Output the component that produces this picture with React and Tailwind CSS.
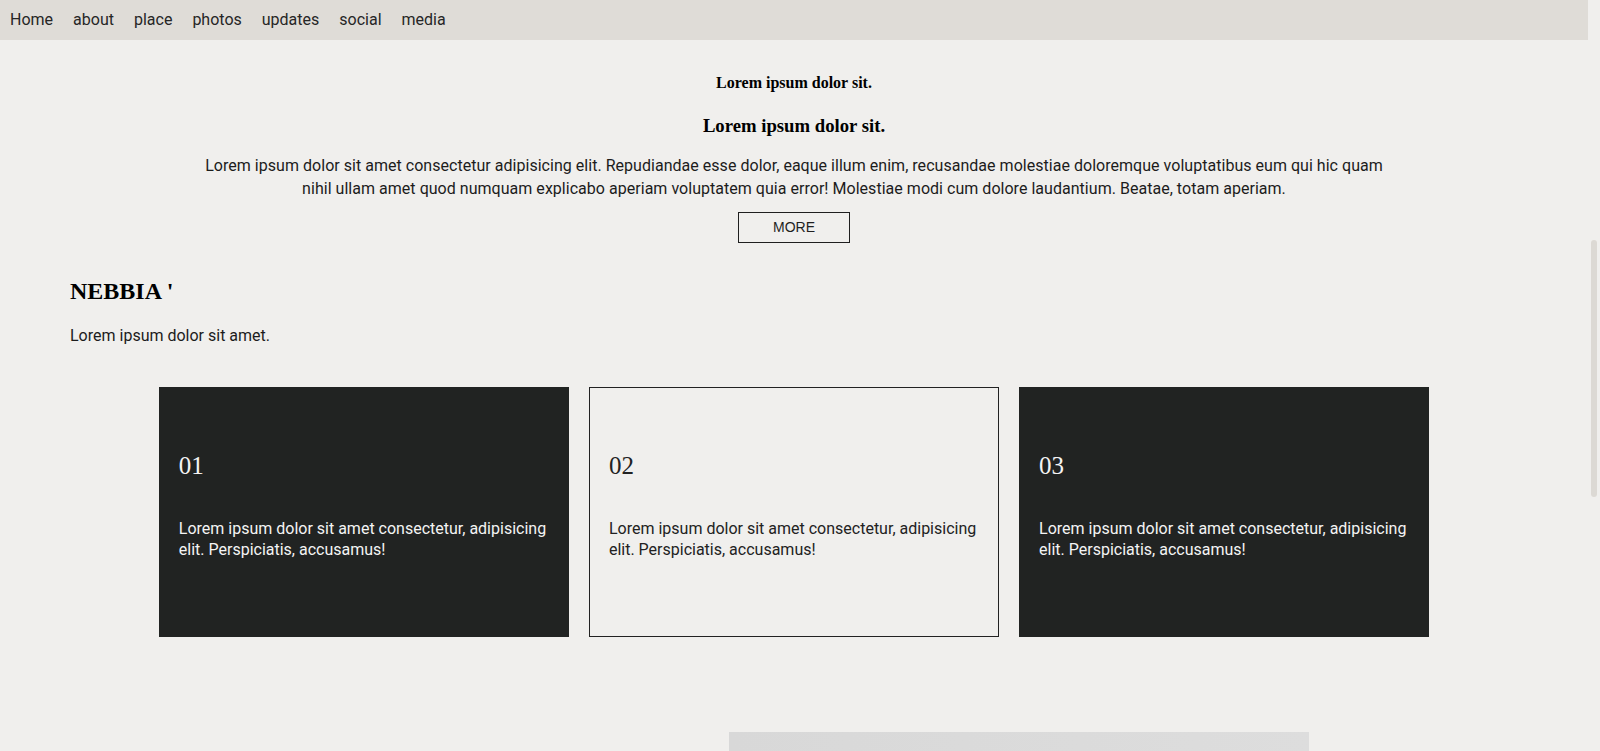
export default function App() {
  const navItems = ["Home", "about", "place", "photos", "updates", "social", "media"];
  const cards = [
    { n: "01", dark: true },
    { n: "02", dark: false },
    { n: "03", dark: true },
  ];
  return (
    <div className="flex h-screen w-full overflow-hidden bg-[#f0efed] font-['Roboto',sans-serif] text-[#1c1c1c]">
      <div className="flex-1 flex flex-col min-w-0">
        <nav className="h-[40px] shrink-0 bg-[#dfdcd7] flex items-center">
          {navItems.map((t) => (
            <a key={t} className="px-[10px] text-[16px] text-[#262626] leading-[20px]">{t}</a>
          ))}
        </nav>

        <section className="text-center">
          <h4 className="mt-[34px] font-['Liberation_Serif',serif] font-bold text-[16px] leading-[18px] text-black">Lorem ipsum dolor sit.</h4>
          <h3 className="mt-[23px] font-['Liberation_Serif',serif] font-bold text-[18.72px] leading-[21.5px] text-black">Lorem ipsum dolor sit.</h3>
          <p className="mt-[17px] mx-auto w-[1195px] text-[16px] leading-[23px] tracking-[0.03px]">
            Lorem ipsum dolor sit amet consectetur adipisicing elit. Repudiandae esse dolor, eaque illum enim, recusandae molestiae doloremque voluptatibus eum qui hic quam nihil ullam amet quod numquam explicabo aperiam voluptatem quia error! Molestiae modi cum dolore laudantium. Beatae, totam aperiam.
          </p>
          <button className="mt-[12px] w-[112px] h-[31px] border border-[#1f1f1f] font-['Liberation_Sans',sans-serif] text-[14px] text-[#1f1f1f] bg-transparent">MORE</button>
        </section>

        <section className="pl-[70px] mt-[34px]">
          <h2 className="font-['Liberation_Serif',serif] font-bold text-[24px] leading-[28px] text-black">NEBBIA '</h2>
          <p className="mt-[19px] text-[16px] leading-[23px]">Lorem ipsum dolor sit amet.</p>
        </section>

        <div className="mt-[40px] mx-auto w-[80%] flex gap-[20px]">
          {cards.map((c) => (
            <div
              key={c.n}
              className={
                c.dark
                  ? "flex-1 h-[250px] bg-[#212322] text-[#f4f4f4] px-[20px] pt-[64px]"
                  : "flex-1 h-[250px] border border-[#222] text-[#222] px-[19px] pt-[63px]"
              }
            >
              <div className="font-['Liberation_Serif',serif] text-[25px] leading-[30px] [font-variant-numeric:oldstyle-nums]">{c.n}</div>
              <p className="mt-[37px] text-[16px] leading-[21.5px]">
                Lorem ipsum dolor sit amet consectetur, adipisicing elit. Perspiciatis, accusamus!
              </p>
            </div>
          ))}
        </div>

        <div className="mt-[95px] ml-[729px] w-[580px] h-[300px] shrink-0 bg-gradient-to-r from-[#d8d8d8] to-[#dddddd]"></div>
      </div>

      <aside className="w-[12px] shrink-0 bg-[#f0efed]">
        <div className="mt-[240px] ml-[3px] w-[6px] h-[257px] rounded-full bg-[#dcd9d4]"></div>
      </aside>
    </div>
  );
}
